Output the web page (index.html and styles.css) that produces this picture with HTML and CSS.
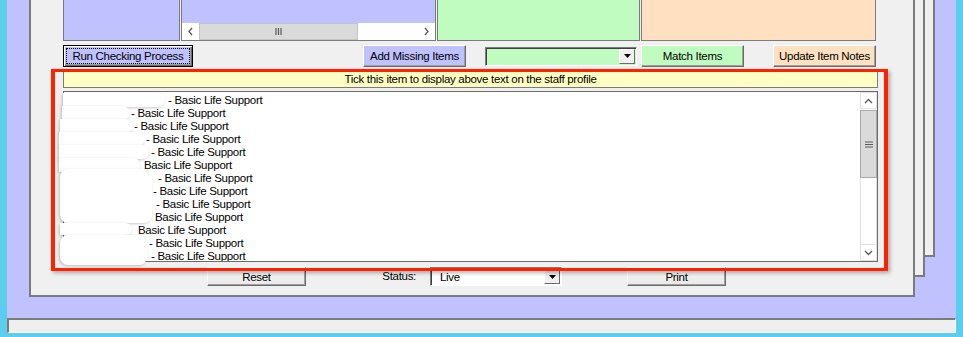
FILE: index.html
```html
<!DOCTYPE html>
<html lang="en">
<head>
    <meta charset="UTF-8">
    <title>Staff Profile Items</title>
    <link rel="stylesheet" href="styles.css">
</head>
<body>
    <div class="screen">
        <div class="desktop">
            <div class="window window-back2"></div>
            <div class="window window-back1"></div>

            <div class="window window-front">
                <div class="boxes">
                    <div class="box box-blue box-1"></div>
                    <div class="box box-blue box-2">
                        <div class="hscroll">
                            <span class="sb-btn">
                                <svg width="7" height="9" viewBox="0 0 7 9"><polyline points="5,1 2,4.5 5,8" fill="none" stroke="#5a5a5a" stroke-width="1.3"/></svg>
                            </span>
                            <span class="hthumb">
                                <svg width="7" height="7" viewBox="0 0 7 7"><path d="M1 0v7M3.5 0v7M6 0v7" stroke="#5a5a5a" stroke-width="1.2"/></svg>
                            </span>
                            <span class="htrack"></span>
                            <span class="sb-btn">
                                <svg width="7" height="9" viewBox="0 0 7 9"><polyline points="2,1 5,4.5 2,8" fill="none" stroke="#5a5a5a" stroke-width="1.3"/></svg>
                            </span>
                        </div>
                    </div>
                    <div class="box box-green box-3"></div>
                    <div class="box box-peach box-4"></div>
                </div>

                <div class="toolbar">
                    <button class="btn btn-blue btn-focus btn-run"><span>Run Checking Process</span></button>
                    <button class="btn btn-blue btn-add">Add Missing Items</button>
                    <div class="combo combo-green">
                        <span class="combo-text"></span>
                        <span class="combo-arrow">
                            <svg width="7" height="4" viewBox="0 0 7 4"><polygon points="0,0 7,0 3.5,4" fill="#000"/></svg>
                        </span>
                    </div>
                    <button class="btn btn-green btn-match">Match Items</button>
                    <button class="btn btn-peach btn-notes">Update Item Notes</button>
                </div>

                <div class="hint">Tick this item to display above text on the staff profile</div>

                <div class="listbox">
                    <ul class="items">
                        <li><span class="gap" style="width:103px"></span>- Basic Life Support</li>
                        <li><span class="gap" style="width:66px"></span>- Basic Life Support</li>
                        <li><span class="gap" style="width:69px"></span>- Basic Life Support</li>
                        <li><span class="gap" style="width:81px"></span>- Basic Life Support</li>
                        <li><span class="gap" style="width:86px"></span>- Basic Life Support</li>
                        <li><span class="gap" style="width:79px"></span>Basic Life Support</li>
                        <li><span class="gap" style="width:93px"></span>- Basic Life Support</li>
                        <li><span class="gap" style="width:88px"></span>- Basic Life Support</li>
                        <li><span class="gap" style="width:91px"></span>- Basic Life Support</li>
                        <li><span class="gap" style="width:90px"></span>Basic Life Support</li>
                        <li><span class="gap" style="width:73px"></span>Basic Life Support</li>
                        <li><span class="gap" style="width:84px"></span>- Basic Life Support</li>
                        <li><span class="gap" style="width:86px"></span>- Basic Life Support</li>
                    </ul>
                    <div class="vscroll">
                        <span class="vs-btn">
                            <svg width="9" height="6" viewBox="0 0 9 6"><polyline points="1,5 4.5,1.5 8,5" fill="none" stroke="#5a5a5a" stroke-width="1.3"/></svg>
                        </span>
                        <span class="vthumb">
                            <svg width="8" height="7" viewBox="0 0 8 7"><path d="M0 1h8M0 3.5h8M0 6h8" stroke="#5a5a5a" stroke-width="1.2"/></svg>
                        </span>
                        <span class="vtrack"></span>
                        <span class="vs-btn">
                            <svg width="9" height="6" viewBox="0 0 9 6"><polyline points="1,1 4.5,4.5 8,1" fill="none" stroke="#5a5a5a" stroke-width="1.3"/></svg>
                        </span>
                    </div>

                    <!-- names blanked out in the screenshot -->
                    <span class="blob blob-1"></span>
                    <span class="blob blob-2"></span>
                    <span class="blob blob-3"></span>
                    <span class="blob blob-4"></span>
                    <span class="blob blob-5"></span>
                    <span class="blob blob-6"></span>
                    <span class="blob blob-7"></span>
                    <span class="blob blob-8"></span>
                    <span class="blob blob-9"></span>
                </div>

                <div class="footer">
                    <button class="btn btn-grey btn-reset">Reset</button>
                    <label class="status-label">Status:</label>
                    <div class="combo combo-white">
                        <span class="combo-text">Live</span>
                        <span class="combo-arrow">
                            <svg width="7" height="4" viewBox="0 0 7 4"><polygon points="0,0 7,0 3.5,4" fill="#000"/></svg>
                        </span>
                    </div>
                    <button class="btn btn-grey btn-print">Print</button>
                </div>

                <div class="highlight"></div>
            </div>
        </div>
        <div class="statusbar"></div>
    </div>
</body>
</html>
```

FILE: styles.css
```css
body
{
    margin: 0;
    font-family: "Liberation Sans", Arial, sans-serif;
    font-size: 11.5px;
    letter-spacing: -0.3px;
    color: #000;
}

.screen
{
    width: 963px;
    height: 337px;
    box-sizing: border-box;
    padding: 0 7px 4px;
    background-color: #5ccdec;
    display: flex;
    flex-direction: column;
}

.desktop
{
    position: relative;
    flex: 1;
    overflow: hidden;
    background-color: #bfc2ff;
}

.statusbar
{
    height: 15px;
    box-sizing: border-box;
    background-color: #efefef;
    border-top: 2px solid #7b7b7b;
    border-left: 2px solid #7b7b7b;
    border-right: 1px solid #fff;
    border-bottom: 1px solid #fff;
}

/* MDI child windows */
.window
{
    position: absolute;
    box-sizing: border-box;
    background-color: #f0f0f0;
    border: 2px solid #7b7b7b;
}

.window-back2
{
    left: 60px;
    top: -40px;
    width: 868px;
    height: 297px;
}

.window-back1
{
    left: 50px;
    top: -30px;
    width: 868px;
    height: 307px;
}

.window-front
{
    left: 22px;
    top: -20px;
    width: 886px;
    height: 317px;
    padding-left: 32px;
}

/* top coloured panels */
.boxes
{
    display: flex;
    gap: 1px;
    height: 59px;
}

.box
{
    box-sizing: border-box;
    border: 1px solid #7b7b7b;
}

.box-blue { background-color: #bfc2ff; }
.box-green { background-color: #c0fcc0; }
.box-peach { background-color: #ffe0c0; }

.box-1 { width: 117px; }
.box-3 { width: 203px; }
.box-4 { width: 235px; }

.box-2
{
    width: 255px;
    display: flex;
    flex-direction: column;
    justify-content: flex-end;
}

.hscroll
{
    display: flex;
    height: 17px;
    background-color: #fff;
}

.sb-btn
{
    width: 17px;
    display: flex;
    align-items: center;
    justify-content: center;
    background-color: #fff;
}

.hthumb
{
    width: 159px;
    box-sizing: border-box;
    background-color: #dadada;
    border: 1px solid #c4c4c4;
    display: flex;
    align-items: center;
    justify-content: center;
}

.htrack
{
    flex: 1;
}

/* buttons */
.toolbar
{
    display: flex;
    align-items: center;
    margin-top: 4px;
    height: 22px;
}

.btn
{
    box-sizing: border-box;
    height: 22px;
    padding: 0;
    font: inherit;
    letter-spacing: inherit;
    color: #000;
    border: 1px solid;
    border-color: #fff #6b6b6b #6b6b6b #fff;
    box-shadow: inset -1px -1px #a0a0a0;
    cursor: pointer;
}

.btn-blue { background-color: #c0c2ff; }
.btn-green { background-color: #c0fcc0; }
.btn-peach { background-color: #ffe0c0; }
.btn-grey { background: linear-gradient(#f6f6f6, #e9e9e9); }

.btn-focus
{
    border: 1px solid #000;
    box-shadow: inset 1px 1px #fff, inset -1px -1px #6b6b6b, inset -2px -2px #a0a0a0;
}

.btn-focus span
{
    display: block;
    margin: 2px;
    border: 1px dotted #000;
    line-height: 14px;
}

.btn-run { width: 130px; }

.btn-add
{
    width: 103px;
    margin-left: 170px;
}

.btn-match
{
    width: 103px;
    margin-left: 4px;
}

.btn-notes
{
    width: 103px;
    margin-left: 29px;
}

.combo
{
    box-sizing: border-box;
    height: 19px;
    display: flex;
    border: 1px solid;
    border-color: #7b7b7b #fff #fff #7b7b7b;
    box-shadow: inset 1px 1px #404040;
}

.combo-green
{
    width: 152px;
    margin-left: 19px;
    background-color: #c0fcc0;
}

.combo-white
{
    width: 132px;
    background-color: #fff;
}

.combo-text
{
    flex: 1;
    padding-left: 9px;
    line-height: 18px;
}

.combo-arrow
{
    width: 16px;
    margin: 1px 1px 1px 0;
    box-sizing: border-box;
    background-color: #f0f0f0;
    border: 1px solid;
    border-color: #fff #6b6b6b #6b6b6b #fff;
    display: flex;
    align-items: center;
    justify-content: center;
}

/* list */
.hint
{
    box-sizing: border-box;
    width: 815px;
    height: 18px;
    margin-top: 3px;
    background-color: #ffffc4;
    border: 1px solid #7b7b7b;
    text-align: center;
    line-height: 17px;
}

.listbox
{
    position: relative;
    box-sizing: border-box;
    width: 815px;
    height: 171px;
    margin-top: 3px;
    background-color: #fff;
    border: 1px solid #6b6b6b;
    display: flex;
}

.items
{
    flex: 1;
    margin: 0;
    padding: 1px 0 0 1px;
    list-style: none;
    overflow: hidden;
}

.items li
{
    height: 13px;
    line-height: 14px;
    white-space: nowrap;
}

.gap
{
    display: inline-block;
}

.vscroll
{
    width: 17px;
    display: flex;
    flex-direction: column;
    background-color: #fff;
}

.vs-btn
{
    height: 17px;
    box-sizing: border-box;
    border: 1px solid #e2e2e2;
    display: flex;
    align-items: center;
    justify-content: center;
}

.vthumb
{
    height: 68px;
    margin-top: 1px;
    box-sizing: border-box;
    background-color: #dadada;
    border: 1px solid #a8a8a8;
    display: flex;
    align-items: center;
    justify-content: center;
}

.vtrack
{
    flex: 1;
    border-left: 1px solid #e2e2e2;
    border-right: 1px solid #e2e2e2;
}

/* white redaction marks over the names */
.blob
{
    position: absolute;
    background-color: #fff;
    border-radius: 0 7px 7px 0;
    box-shadow: -1px 1px 3px rgba(0, 0, 0, 0.22);
}

.blob-1 { left: -1px; top: 1px; width: 102px; height: 14px; }
.blob-2 { left: -2px; top: 14px; width: 68px; height: 14px; }
.blob-3 { left: -4px; top: 27px; width: 73px; height: 14px; }
.blob-4 { left: -5px; top: 40px; width: 86px; height: 14px; }
.blob-5 { left: -5px; top: 53px; width: 90px; height: 14px; }
.blob-6 { left: -5px; top: 66px; width: 81px; height: 14px; }
.blob-7 { left: -4px; top: 77px; width: 92px; height: 54px; border-radius: 8px; }
.blob-8 { left: -4px; top: 131px; width: 72px; height: 12px; }
.blob-9 { left: -4px; top: 143px; width: 87px; height: 30px; border-radius: 8px; }

/* bottom row */
.footer
{
    display: flex;
    margin-top: 5px;
    height: 19px;
}

.footer .btn
{
    height: 19px;
    width: 99px;
}

.btn-reset
{
    margin-left: 144px;
}

.status-label
{
    box-sizing: border-box;
    width: 124px;
    padding-right: 14px;
    text-align: right;
    line-height: 19px;
}

.btn-print
{
    margin-left: 65px;
}

/* red annotation frame */
.highlight
{
    position: absolute;
    left: 20px;
    top: 87px;
    width: 837px;
    height: 202px;
    box-sizing: border-box;
    border: solid #ff2200;
    border-width: 3px 4px;
    box-shadow: 2px 2px 4px rgba(0, 0, 0, 0.3);
}
```
